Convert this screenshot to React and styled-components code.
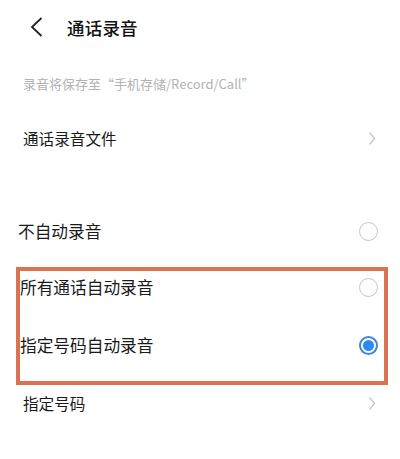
import styled, { createGlobalStyle } from 'styled-components';

const GlobalStyle = createGlobalStyle`
  body {
    margin: 0;
    background: #ffffff;
    font-family: 'Noto Sans CJK SC', 'Noto Sans', sans-serif;
    color: #1a1a1a;
  }
`;

const Page = styled.div`
  width: 400px;
  height: 459px;
  overflow: hidden;
  background: #fff;
  display: flex;
  flex-direction: column;
`;

const Header = styled.div`
  height: 54px;
  display: flex;
  align-items: center;
  gap: 23px;
  padding-left: 29px;
`;

const Title = styled.div`
  font-size: 17.5px;
  font-weight: 500;
  color: #111;
  letter-spacing: 0.2px;
`;

const Note = styled.div`
  height: 58px;
  display: flex;
  align-items: center;
  padding-left: 23px;
  font-size: 13px;
  color: #b3b3b3;
`;

const NavRow = styled.div`
  height: 52px;
  display: flex;
  align-items: center;
  justify-content: space-between;
  padding: 0 24px 0 23px;
  margin-top: ${(p) => p.$top || 0}px;
  font-size: 15.6px;
`;

const OptionRow = styled.div`
  height: 32px;
  display: flex;
  align-items: center;
  justify-content: space-between;
  padding: ${(p) => (p.$boxed ? '0 6px 0 0' : '0 22px 0 18px')};
  font-size: 16.7px;
`;

const Highlight = styled.div`
  margin: 20px 12px 0 16px;
  border: 4.5px solid #db7252;
  display: flex;
  flex-direction: column;
  gap: 26px;
  padding-bottom: 20px;
`;

const Radio = styled.span`
  width: 19px;
  height: 19px;
  box-sizing: border-box;
  border-radius: 50%;
  border: ${(p) => (p.$on ? '2px solid #3f86d6' : '1.5px solid #c6c6c6')};
  display: flex;
  align-items: center;
  justify-content: center;

  &::after {
    content: '';
    display: ${(p) => (p.$on ? 'block' : 'none')};
    width: 11px;
    height: 11px;
    border-radius: 50%;
    background: #2b8af3;
  }
`;

function BackIcon() {
  return (
    <svg width="15" height="22" viewBox="0 0 15 22">
      <path d="M12.5 2 L3 11 L12.5 20" fill="none" stroke="#222" strokeWidth="1.8" />
    </svg>
  );
}

function Chevron() {
  return (
    <svg width="8" height="15" viewBox="0 0 8 15">
      <path d="M1.5 1.5 L6.5 7.5 L1.5 13.5" fill="none" stroke="#c9c9c9" strokeWidth="1.4" />
    </svg>
  );
}

export default function App() {
  return (
    <Page>
      <GlobalStyle />
      <Header>
        <BackIcon />
        <Title>通话录音</Title>
      </Header>
      <Note>录音将保存至“手机存储/Record/Call”</Note>
      <NavRow>
        <span>通话录音文件</span>
        <Chevron />
      </NavRow>
      <div style={{ height: 51 }} />
      <OptionRow>
        <span>不自动录音</span>
        <Radio />
      </OptionRow>
      <Highlight>
        <OptionRow $boxed>
          <span>所有通话自动录音</span>
          <Radio />
        </OptionRow>
        <OptionRow $boxed>
          <span>指定号码自动录音</span>
          <Radio $on />
        </OptionRow>
      </Highlight>
      <NavRow $top={-8}>
        <span>指定号码</span>
        <Chevron />
      </NavRow>
    </Page>
  );
}
